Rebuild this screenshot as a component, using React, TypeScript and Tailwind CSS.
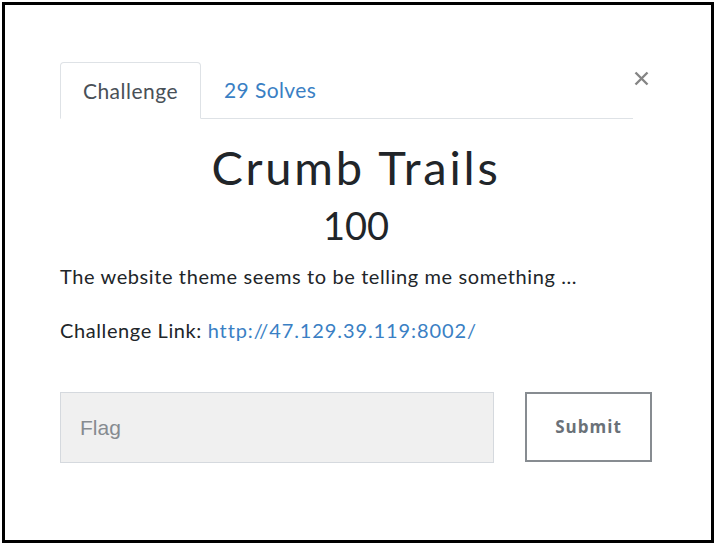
import React from 'react';

const Tabs: React.FC = () => (
  <div className="flex items-start">
    <div className="flex flex-1 border-b border-[#dee2e6]">
      <div className="-mb-px flex h-[57px] w-[141px] items-center justify-center rounded-t-[4px] border border-b-white border-[#dee2e6] bg-white text-[21px] tracking-[0.5px] text-[#495057]">
        Challenge
      </div>
      <div className="flex h-[56px] items-center px-[23px] text-[21px] tracking-[0.4px] text-[#3a7fc4]">29 Solves</div>
    </div>
    <button className="mt-[9px] flex h-[19px] w-[19px] items-start justify-start pl-[1px] text-[#858585]">
      <svg width="15" height="15" viewBox="0 0 15 15">
        <path d="M1.5 1.5 L13.5 13.5 M13.5 1.5 L1.5 13.5" stroke="currentColor" strokeWidth="2.4" />
      </svg>
    </button>
  </div>
);

export default function App() {
  return (
    <div className="h-[543px] w-[714px] bg-white pl-[2px] pt-[2px]" style={{ fontFamily: 'Lato, "Noto Sans", sans-serif' }}>
      <div className="h-[541px] w-[712px] border-[3px] border-black pl-[55px] pr-[55px] pt-[57px]">
        <div className="w-[592px]">
          <Tabs />
          <div className="text-center text-[#212529]">
            <h2 className="mt-[20px] text-[47px] leading-[56px] tracking-[2.8px]">Crumb Trails</h2>
            <h3 className="mt-[7px] text-[38px] leading-[46px]">100</h3>
          </div>
          <div className="text-[20px] tracking-[0.6px] text-[#212529]">
            <p className="mt-[12px] leading-[32px]">The website theme seems to be telling me something ...</p>
            <p className="mt-[22px] leading-[32px]">
              Challenge Link: <span className="tracking-[0.9px] text-[#3a7fc4]">http://47.129.39.119:8002/</span>
            </p>
          </div>
          <div className="mt-[46px] flex items-start">
            <div
              className="flex h-[71px] w-[434px] items-center border border-[#d5d9de] bg-[#f0f0f0] pl-[19px] text-[21px] text-[#868b90]"
              style={{ fontFamily: '"Liberation Sans", Arial, sans-serif' }}
            >
              Flag
            </div>
            <button
              className="ml-[31px] flex h-[70px] w-[127px] items-center justify-center border-2 border-[#878c91] bg-white text-[17px] font-bold tracking-[1px] text-[#6a7178]"
              style={{ fontFamily: '"Open Sans", sans-serif' }}
            >
              Submit
            </button>
          </div>
        </div>
      </div>
    </div>
  );
}
